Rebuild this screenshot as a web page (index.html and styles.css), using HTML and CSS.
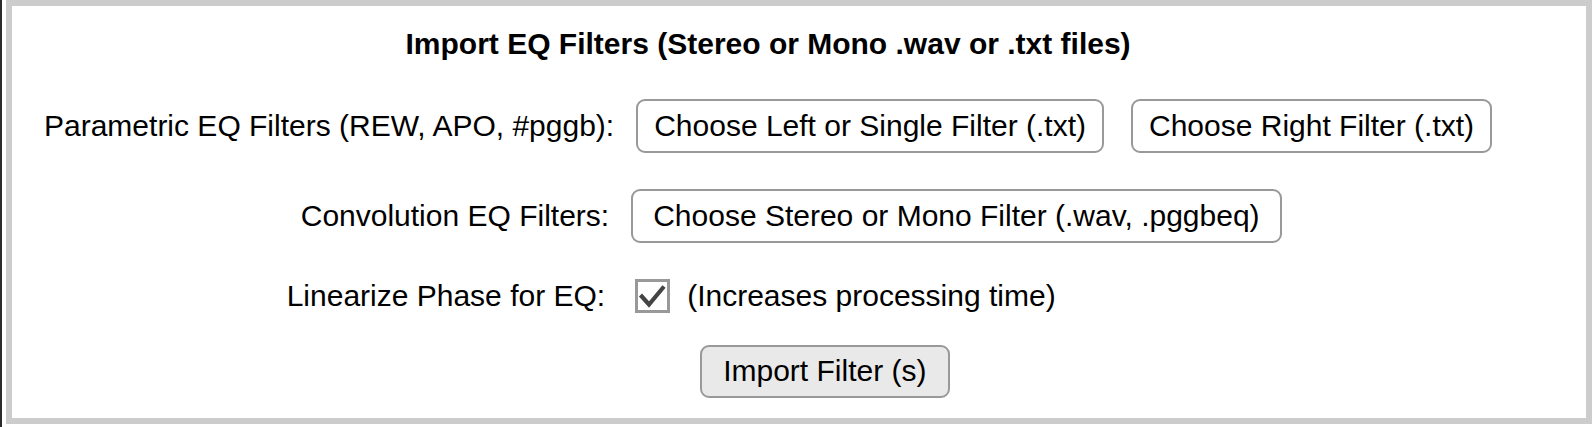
FILE: index.html
```html
<!DOCTYPE html>
<html lang="en">
<head>
    <meta charset="UTF-8">
    <meta name="viewport" content="width=device-width, initial-scale=1.0">
    <title>Import EQ Filters</title>
    <link rel="stylesheet" href="styles.css">
</head>
<body>
    <section class="panel">
        <div class="eq-form">
            <h2 class="eq-title">Import EQ Filters (Stereo or Mono .wav or .txt files)</h2>

            <!-- Parametric filters -->
            <label class="eq-label">Parametric EQ Filters (REW, APO, #pggb):</label>
            <div class="eq-field">
                <button class="file-btn">Choose Left or Single Filter (.txt)</button>
                <button class="file-btn">Choose Right Filter (.txt)</button>
            </div>

            <!-- Convolution filters -->
            <label class="eq-label eq-label-short">Convolution EQ Filters:</label>
            <div class="eq-field">
                <button class="file-btn file-btn-wide">Choose Stereo or Mono Filter (.wav, .pggbeq)</button>
            </div>

            <!-- Linear phase option -->
            <label class="eq-label eq-label-shorter">Linearize Phase for EQ:</label>
            <div class="eq-field">
                <span class="checkbox">
                    <svg width="29" height="28" viewBox="0 0 29 28">
                        <polyline points="2.5,13 11,22.5 26,4.5" fill="none" stroke="#444" stroke-width="4.2"/>
                    </svg>
                </span>
                <span class="hint">(Increases processing time)</span>
            </div>

            <div class="eq-field eq-submit">
                <button class="import-btn">Import Filter (s)</button>
            </div>
        </div>
    </section>
</body>
</html>
```

FILE: styles.css
```css
html {
    background: #fff;
}
body {
    margin: 0;
    padding-left: 4px;
    min-height: 427px;
    box-sizing: border-box;
    border-left: 2px solid #2b2b2b;
    font-family: "Liberation Sans", Arial, sans-serif;
    font-size: 30px;
    color: #000;
}
.panel {
    width: 1586px;
    height: 424px;
    box-sizing: border-box;
    border: 6px solid #ccc;
    padding: 21px 0 0 32px;
}
.eq-form {
    display: inline-grid;
    grid-template-columns: auto auto;
    column-gap: 22px;
    row-gap: 36px;
    align-items: center;
    line-height: 34px;
}
.eq-title {
    grid-column: 1 / 3;
    margin: 0 0 2px 0;
    font-size: 30px;
    font-weight: bold;
    text-align: center;
    line-height: 34px;
}
.eq-label {
    text-align: right;
}
.eq-label-short {
    padding-right: 5px;
}
.eq-label-shorter {
    padding-right: 9px;
}
.eq-field {
    display: flex;
    align-items: center;
}
.file-btn {
    font-family: inherit;
    font-size: 30px;
    line-height: 34px;
    color: #000;
    background: #fff;
    border: 2px solid #999;
    border-radius: 9px;
    padding: 8px 16px;
}
.file-btn + .file-btn {
    margin-left: 27px;
}
.file-btn-wide {
    padding: 8px 20px;
    margin-left: -5px;
}
.checkbox {
    width: 35px;
    height: 34px;
    box-sizing: border-box;
    border: 3px solid #999;
    display: flex;
    margin-left: -1px;
    margin-right: 17px;
}
.eq-submit {
    grid-column: 2;
    margin-top: -4px;
    padding-left: 64px;
}
.import-btn {
    font-family: inherit;
    font-size: 30px;
    line-height: 34px;
    color: #000;
    background: #e9e9e9;
    border: 2px solid #999;
    border-radius: 9px;
    padding: 7px 21px 8px;
}
```
